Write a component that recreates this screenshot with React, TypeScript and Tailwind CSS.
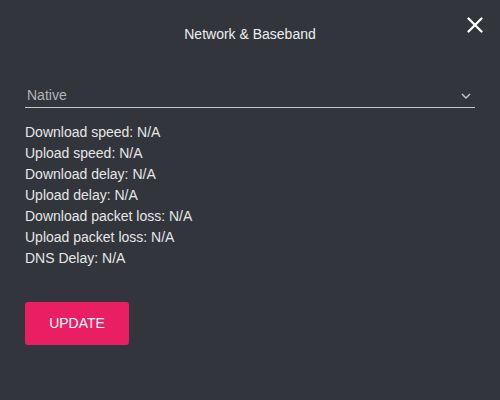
import { X } from 'lucide-react'

const stats = [
  'Download speed: N/A',
  'Upload speed: N/A',
  'Download delay: N/A',
  'Upload delay: N/A',
  'Download packet loss: N/A',
  'Upload packet loss: N/A',
  'DNS Delay: N/A',
]

export default function App() {
  return (
    <div className="w-[500px] h-[400px] bg-[#32353c] text-[#e6e6e6] px-[25px] relative" style={{ fontFamily: '"Liberation Sans", Arial, sans-serif' }}>
      {/* Header */}
      <div className="h-[68px] flex items-center justify-center text-[14px] text-[#eeeeee]">
        Network &amp; Baseband
      </div>
      <button className="absolute right-[12px] top-[12px] p-0 text-white">
        <X className="w-[26px] h-[26px]" strokeWidth={2.2} />
      </button>

      {/* Select */}
      <div className="mt-[16px] h-[24px] flex items-center justify-between border-b border-[#c8c8c8] pl-[2px] pr-[4px]">
        <span className="text-[14px] text-[#b4b4b4]">Native</span>
        <svg width="10" height="6" viewBox="0 0 10 6" fill="none" stroke="#c8c8c8" strokeWidth="1.4">
          <path d="M1 1l4 4 4-4" />
        </svg>
      </div>

      {/* Stats */}
      <div className="mt-[14px] flex flex-col text-[14px] leading-[21px]">
        {stats.map((s) => (
          <div key={s}>{s}</div>
        ))}
      </div>

      <button className="mt-[33px] w-[104px] h-[43px] bg-[#e91e63] rounded-[3px] text-white text-[14px]">
        UPDATE
      </button>
    </div>
  )
}
